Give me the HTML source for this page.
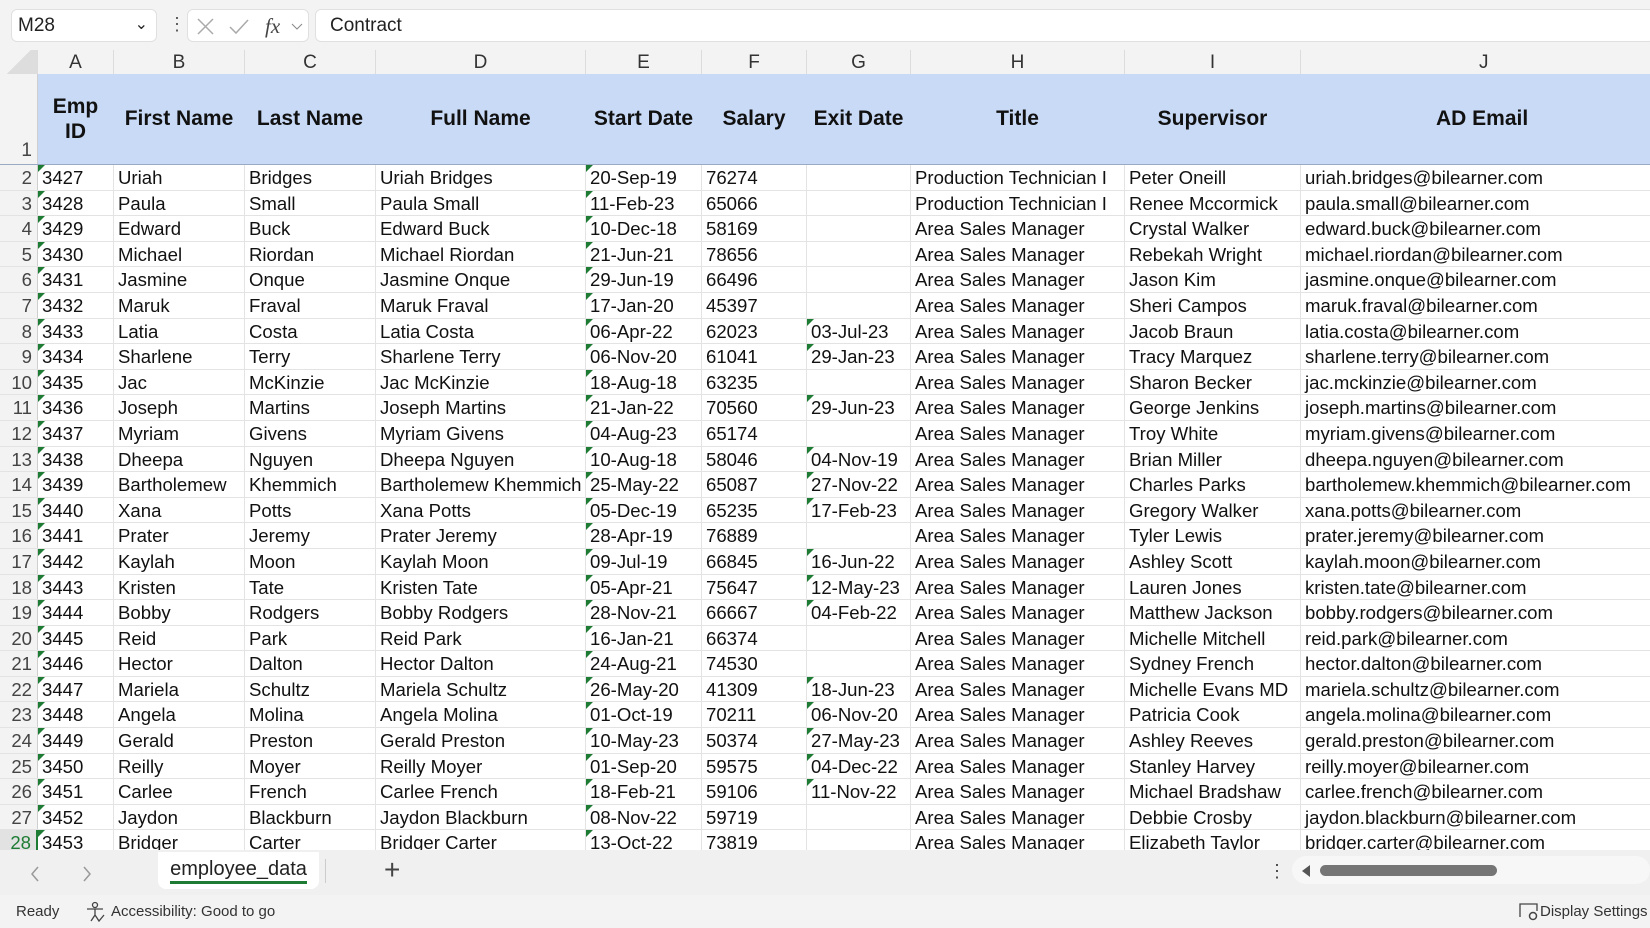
<!DOCTYPE html>
<html><head><meta charset="utf-8"><style>
*{box-sizing:border-box;margin:0;padding:0}
body{width:1650px;height:928px;overflow:hidden;background:#fff;font-family:"Liberation Sans",Arial,sans-serif;position:relative}
.top{position:absolute;left:0;top:0;width:1650px;height:50px;background:#f3f3f3}
.nb{position:absolute;left:11px;top:9px;width:146px;height:33px;background:#fff;border:1px solid #e0e0e0;border-radius:6px;font-size:19px;padding:5px 6px;color:#222}
.fx{position:absolute;left:187px;top:9px;width:122px;height:33px;background:#fff;border:1px solid #e0e0e0;border-radius:6px}
.fb{position:absolute;left:315px;top:9px;width:1340px;height:33px;background:#fff;border:1px solid #e0e0e0;border-radius:6px;font-size:19px;padding:5px 14px;color:#222}
.ch{position:absolute;left:0;top:50px;height:24px;width:1650px;background:#f3f3f3;display:flex}
.ch div{flex:none;font-size:19px;text-align:center;color:#333;border-right:1px solid #dcdcdc;line-height:26px}
.grid{position:absolute;left:0;top:74px;width:1650px}
.r{display:flex;height:25.6px;border-bottom:1px solid #e3e3e3}
.r div{flex:none;font-size:18.6px;line-height:25px;padding-left:4px;border-right:1px solid #e3e3e3;white-space:nowrap;overflow:hidden;color:#111;position:relative}
.r div.h{background:#f3f3f3;text-align:right;padding-right:5px;padding-left:0;color:#444;border-right:1px solid #cfcfcf}
.r div.t:before{content:"";position:absolute;left:0;top:0;border-top:7px solid #1e7b34;border-right:7px solid transparent}
.hr{height:91px;background:#c9daf6;border-bottom:1px solid #9aaac4}
.hr div{font-weight:bold;font-size:21px;display:flex;align-items:center;justify-content:center;text-align:center;border-right:1px solid #c9daf6;line-height:25px;padding:0;padding-bottom:1px}
.hr div.h{background:#f3f3f3;align-items:flex-end;justify-content:flex-end;font-weight:normal;font-size:19px;padding-right:5px;border-right:1px solid #cfcfcf}
.w0{width:38px}.w1{width:76px}.w2{width:131px}.w3{width:131px}.w4{width:210px}.w5{width:116px}.w6{width:105px}.w7{width:104px}.w8{width:214px}.w9{width:176px}.w10{width:400px}
.tabs{position:absolute;left:0;top:850px;width:1650px;height:45px;background:#f0f0f0}
.tab{position:absolute;left:158px;top:2px;width:161px;height:37px;background:#fff;border-radius:0 0 8px 8px;font-size:20px;text-align:center;padding-top:6px;color:#222}
.tab span{border-bottom:3px solid #1e7b34;padding-bottom:1px}
.status{position:absolute;left:0;top:895px;width:1650px;height:33px;background:#f3f3f3;font-size:15px;color:#333}
</style></head><body>
<div class="top">
<div class="nb">M28<span style="position:absolute;right:8px;top:4px;font-size:16px">&#8964;</span></div>
<div style="position:absolute;left:168px;top:14px;font-size:18px;color:#555">&#8942;</div>
<div class="fx"><svg width="122" height="33"><path d="M10 9l15 15M25 9L10 24" stroke="#aaa" stroke-width="1.5"/><path d="M42 17l6 6 12-13" stroke="#aaa" stroke-width="1.5" fill="none"/><text x="77" y="23" font-family="Liberation Serif" font-style="italic" font-size="21" fill="#444">fx</text><path d="M104 14l5 5 5-5" stroke="#888" fill="none"/></svg></div>
<div class="fb">Contract</div>
</div>
<div class="ch"><div class="w0" style="background:linear-gradient(135deg,#f3f3f3 50%,#ddd 50%)"></div><div class="w1">A</div><div class="w2">B</div><div class="w3">C</div><div class="w4">D</div><div class="w5">E</div><div class="w6">F</div><div class="w7">G</div><div class="w8">H</div><div class="w9">I</div><div class="w10" style="text-align:left;padding-left:178px">J</div></div>
<div class="grid">
<div class="r hr"><div class="h w0">1</div><div class="w1">Emp<br>ID</div><div class="w2">First Name</div><div class="w3">Last Name</div><div class="w4">Full Name</div><div class="w5">Start Date</div><div class="w6">Salary</div><div class="w7">Exit Date</div><div class="w8">Title</div><div class="w9">Supervisor</div><div class="w10" style="justify-content:flex-start;padding-left:135px">AD Email</div></div>
<div class="r"><div class="h w0">2</div><div class="w1 t">3427</div><div class="w2">Uriah</div><div class="w3">Bridges</div><div class="w4">Uriah Bridges</div><div class="w5 t">20-Sep-19</div><div class="w6">76274</div><div class="w7"></div><div class="w8">Production Technician I</div><div class="w9">Peter Oneill</div><div class="w10">uriah.bridges@bilearner.com</div></div>
<div class="r"><div class="h w0">3</div><div class="w1 t">3428</div><div class="w2">Paula</div><div class="w3">Small</div><div class="w4">Paula Small</div><div class="w5 t">11-Feb-23</div><div class="w6">65066</div><div class="w7"></div><div class="w8">Production Technician I</div><div class="w9">Renee Mccormick</div><div class="w10">paula.small@bilearner.com</div></div>
<div class="r"><div class="h w0">4</div><div class="w1 t">3429</div><div class="w2">Edward</div><div class="w3">Buck</div><div class="w4">Edward Buck</div><div class="w5 t">10-Dec-18</div><div class="w6">58169</div><div class="w7"></div><div class="w8">Area Sales Manager</div><div class="w9">Crystal Walker</div><div class="w10">edward.buck@bilearner.com</div></div>
<div class="r"><div class="h w0">5</div><div class="w1 t">3430</div><div class="w2">Michael</div><div class="w3">Riordan</div><div class="w4">Michael Riordan</div><div class="w5 t">21-Jun-21</div><div class="w6">78656</div><div class="w7"></div><div class="w8">Area Sales Manager</div><div class="w9">Rebekah Wright</div><div class="w10">michael.riordan@bilearner.com</div></div>
<div class="r"><div class="h w0">6</div><div class="w1 t">3431</div><div class="w2">Jasmine</div><div class="w3">Onque</div><div class="w4">Jasmine Onque</div><div class="w5 t">29-Jun-19</div><div class="w6">66496</div><div class="w7"></div><div class="w8">Area Sales Manager</div><div class="w9">Jason Kim</div><div class="w10">jasmine.onque@bilearner.com</div></div>
<div class="r"><div class="h w0">7</div><div class="w1 t">3432</div><div class="w2">Maruk</div><div class="w3">Fraval</div><div class="w4">Maruk Fraval</div><div class="w5 t">17-Jan-20</div><div class="w6">45397</div><div class="w7"></div><div class="w8">Area Sales Manager</div><div class="w9">Sheri Campos</div><div class="w10">maruk.fraval@bilearner.com</div></div>
<div class="r"><div class="h w0">8</div><div class="w1 t">3433</div><div class="w2">Latia</div><div class="w3">Costa</div><div class="w4">Latia Costa</div><div class="w5 t">06-Apr-22</div><div class="w6">62023</div><div class="w7 t">03-Jul-23</div><div class="w8">Area Sales Manager</div><div class="w9">Jacob Braun</div><div class="w10">latia.costa@bilearner.com</div></div>
<div class="r"><div class="h w0">9</div><div class="w1 t">3434</div><div class="w2">Sharlene</div><div class="w3">Terry</div><div class="w4">Sharlene Terry</div><div class="w5 t">06-Nov-20</div><div class="w6">61041</div><div class="w7 t">29-Jan-23</div><div class="w8">Area Sales Manager</div><div class="w9">Tracy Marquez</div><div class="w10">sharlene.terry@bilearner.com</div></div>
<div class="r"><div class="h w0">10</div><div class="w1 t">3435</div><div class="w2">Jac</div><div class="w3">McKinzie</div><div class="w4">Jac McKinzie</div><div class="w5 t">18-Aug-18</div><div class="w6">63235</div><div class="w7"></div><div class="w8">Area Sales Manager</div><div class="w9">Sharon Becker</div><div class="w10">jac.mckinzie@bilearner.com</div></div>
<div class="r"><div class="h w0">11</div><div class="w1 t">3436</div><div class="w2">Joseph</div><div class="w3">Martins</div><div class="w4">Joseph Martins</div><div class="w5 t">21-Jan-22</div><div class="w6">70560</div><div class="w7 t">29-Jun-23</div><div class="w8">Area Sales Manager</div><div class="w9">George Jenkins</div><div class="w10">joseph.martins@bilearner.com</div></div>
<div class="r"><div class="h w0">12</div><div class="w1 t">3437</div><div class="w2">Myriam</div><div class="w3">Givens</div><div class="w4">Myriam Givens</div><div class="w5 t">04-Aug-23</div><div class="w6">65174</div><div class="w7"></div><div class="w8">Area Sales Manager</div><div class="w9">Troy White</div><div class="w10">myriam.givens@bilearner.com</div></div>
<div class="r"><div class="h w0">13</div><div class="w1 t">3438</div><div class="w2">Dheepa</div><div class="w3">Nguyen</div><div class="w4">Dheepa Nguyen</div><div class="w5 t">10-Aug-18</div><div class="w6">58046</div><div class="w7 t">04-Nov-19</div><div class="w8">Area Sales Manager</div><div class="w9">Brian Miller</div><div class="w10">dheepa.nguyen@bilearner.com</div></div>
<div class="r"><div class="h w0">14</div><div class="w1 t">3439</div><div class="w2">Bartholemew</div><div class="w3">Khemmich</div><div class="w4">Bartholemew Khemmich</div><div class="w5 t">25-May-22</div><div class="w6">65087</div><div class="w7 t">27-Nov-22</div><div class="w8">Area Sales Manager</div><div class="w9">Charles Parks</div><div class="w10">bartholemew.khemmich@bilearner.com</div></div>
<div class="r"><div class="h w0">15</div><div class="w1 t">3440</div><div class="w2">Xana</div><div class="w3">Potts</div><div class="w4">Xana Potts</div><div class="w5 t">05-Dec-19</div><div class="w6">65235</div><div class="w7 t">17-Feb-23</div><div class="w8">Area Sales Manager</div><div class="w9">Gregory Walker</div><div class="w10">xana.potts@bilearner.com</div></div>
<div class="r"><div class="h w0">16</div><div class="w1 t">3441</div><div class="w2">Prater</div><div class="w3">Jeremy</div><div class="w4">Prater Jeremy</div><div class="w5 t">28-Apr-19</div><div class="w6">76889</div><div class="w7"></div><div class="w8">Area Sales Manager</div><div class="w9">Tyler Lewis</div><div class="w10">prater.jeremy@bilearner.com</div></div>
<div class="r"><div class="h w0">17</div><div class="w1 t">3442</div><div class="w2">Kaylah</div><div class="w3">Moon</div><div class="w4">Kaylah Moon</div><div class="w5 t">09-Jul-19</div><div class="w6">66845</div><div class="w7 t">16-Jun-22</div><div class="w8">Area Sales Manager</div><div class="w9">Ashley Scott</div><div class="w10">kaylah.moon@bilearner.com</div></div>
<div class="r"><div class="h w0">18</div><div class="w1 t">3443</div><div class="w2">Kristen</div><div class="w3">Tate</div><div class="w4">Kristen Tate</div><div class="w5 t">05-Apr-21</div><div class="w6">75647</div><div class="w7 t">12-May-23</div><div class="w8">Area Sales Manager</div><div class="w9">Lauren Jones</div><div class="w10">kristen.tate@bilearner.com</div></div>
<div class="r"><div class="h w0">19</div><div class="w1 t">3444</div><div class="w2">Bobby</div><div class="w3">Rodgers</div><div class="w4">Bobby Rodgers</div><div class="w5 t">28-Nov-21</div><div class="w6">66667</div><div class="w7 t">04-Feb-22</div><div class="w8">Area Sales Manager</div><div class="w9">Matthew Jackson</div><div class="w10">bobby.rodgers@bilearner.com</div></div>
<div class="r"><div class="h w0">20</div><div class="w1 t">3445</div><div class="w2">Reid</div><div class="w3">Park</div><div class="w4">Reid Park</div><div class="w5 t">16-Jan-21</div><div class="w6">66374</div><div class="w7"></div><div class="w8">Area Sales Manager</div><div class="w9">Michelle Mitchell</div><div class="w10">reid.park@bilearner.com</div></div>
<div class="r"><div class="h w0">21</div><div class="w1 t">3446</div><div class="w2">Hector</div><div class="w3">Dalton</div><div class="w4">Hector Dalton</div><div class="w5 t">24-Aug-21</div><div class="w6">74530</div><div class="w7"></div><div class="w8">Area Sales Manager</div><div class="w9">Sydney French</div><div class="w10">hector.dalton@bilearner.com</div></div>
<div class="r"><div class="h w0">22</div><div class="w1 t">3447</div><div class="w2">Mariela</div><div class="w3">Schultz</div><div class="w4">Mariela Schultz</div><div class="w5 t">26-May-20</div><div class="w6">41309</div><div class="w7 t">18-Jun-23</div><div class="w8">Area Sales Manager</div><div class="w9">Michelle Evans MD</div><div class="w10">mariela.schultz@bilearner.com</div></div>
<div class="r"><div class="h w0">23</div><div class="w1 t">3448</div><div class="w2">Angela</div><div class="w3">Molina</div><div class="w4">Angela Molina</div><div class="w5 t">01-Oct-19</div><div class="w6">70211</div><div class="w7 t">06-Nov-20</div><div class="w8">Area Sales Manager</div><div class="w9">Patricia Cook</div><div class="w10">angela.molina@bilearner.com</div></div>
<div class="r"><div class="h w0">24</div><div class="w1 t">3449</div><div class="w2">Gerald</div><div class="w3">Preston</div><div class="w4">Gerald Preston</div><div class="w5 t">10-May-23</div><div class="w6">50374</div><div class="w7 t">27-May-23</div><div class="w8">Area Sales Manager</div><div class="w9">Ashley Reeves</div><div class="w10">gerald.preston@bilearner.com</div></div>
<div class="r"><div class="h w0">25</div><div class="w1 t">3450</div><div class="w2">Reilly</div><div class="w3">Moyer</div><div class="w4">Reilly Moyer</div><div class="w5 t">01-Sep-20</div><div class="w6">59575</div><div class="w7 t">04-Dec-22</div><div class="w8">Area Sales Manager</div><div class="w9">Stanley Harvey</div><div class="w10">reilly.moyer@bilearner.com</div></div>
<div class="r"><div class="h w0">26</div><div class="w1 t">3451</div><div class="w2">Carlee</div><div class="w3">French</div><div class="w4">Carlee French</div><div class="w5 t">18-Feb-21</div><div class="w6">59106</div><div class="w7 t">11-Nov-22</div><div class="w8">Area Sales Manager</div><div class="w9">Michael Bradshaw</div><div class="w10">carlee.french@bilearner.com</div></div>
<div class="r"><div class="h w0">27</div><div class="w1 t">3452</div><div class="w2">Jaydon</div><div class="w3">Blackburn</div><div class="w4">Jaydon Blackburn</div><div class="w5 t">08-Nov-22</div><div class="w6">59719</div><div class="w7"></div><div class="w8">Area Sales Manager</div><div class="w9">Debbie Crosby</div><div class="w10">jaydon.blackburn@bilearner.com</div></div>
<div class="r"><div class="h w0" style="background:#e2e2e2;color:#1e7b34;border-right:2px solid #1e7b34">28</div><div class="w1 t">3453</div><div class="w2">Bridger</div><div class="w3">Carter</div><div class="w4">Bridger Carter</div><div class="w5 t">13-Oct-22</div><div class="w6">73819</div><div class="w7"></div><div class="w8">Area Sales Manager</div><div class="w9">Elizabeth Taylor</div><div class="w10">bridger.carter@bilearner.com</div></div>
</div>
<div class="tabs">
<svg style="position:absolute;left:28px;top:14px" width="70" height="20"><path d="M10 3l-6 7 6 7M56 3l6 7-6 7" stroke="#999" stroke-width="1.5" fill="none"/></svg>
<div class="tab"><span>employee_data</span></div>
<div style="position:absolute;left:325px;top:9px;width:1px;height:24px;background:#ccc"></div>
<div style="position:absolute;left:384px;top:4px;font-size:28px;color:#444">+</div>
<div style="position:absolute;left:1268px;top:11px;font-size:18px;color:#444">&#8942;</div>
<div style="position:absolute;left:1292px;top:6px;width:358px;height:28px;background:#f7f7f7;border-radius:14px"></div>
<svg style="position:absolute;left:1300px;top:14px" width="12" height="14"><path d="M10 1L2 7l8 6z" fill="#555"/></svg>
<div style="position:absolute;left:1320px;top:15px;width:177px;height:11px;background:#757575;border-radius:6px"></div>
</div>
<div class="status">
<div style="position:absolute;left:16px;top:8px">Ready</div>
<svg style="position:absolute;left:84px;top:6px" width="22" height="22"><circle cx="11" cy="4" r="2.5" fill="none" stroke="#444" stroke-width="1.3"/><path d="M3 8h16M11 8v6l-4 6M11 14l2 3M13 17l2 3 5-6" fill="none" stroke="#444" stroke-width="1.3"/></svg>
<div style="position:absolute;left:111px;top:8px">Accessibility: Good to go</div>
<svg style="position:absolute;left:1518px;top:7px" width="22" height="20"><path d="M2 15V2h17v7" fill="none" stroke="#444" stroke-width="1.3"/><circle cx="15" cy="14" r="3.5" fill="none" stroke="#444" stroke-width="1.5"/></svg>
<div style="position:absolute;left:1540px;top:8px;white-space:nowrap">Display Settings</div>
</div>
</body></html>
